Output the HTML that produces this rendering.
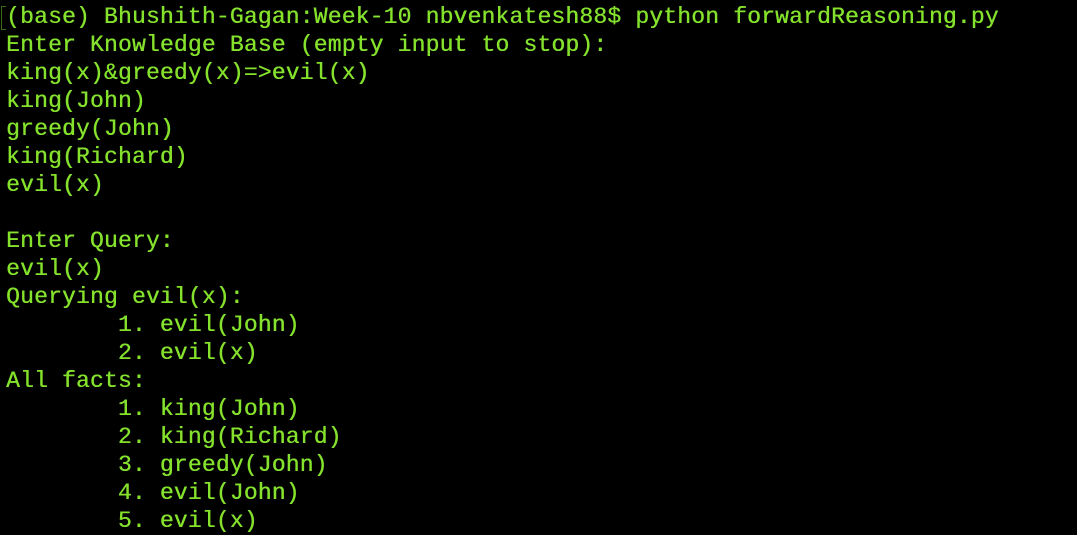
<html><head><style>
body{margin:0;background:#000;width:1077px;height:535px;overflow:hidden}
pre{margin:0;position:absolute;left:6px;top:3px;font-family:"Liberation Mono",monospace;font-size:23px;line-height:28px;color:#84e12c;letter-spacing:0.18px;text-shadow:0.4px 0 0 #84e12c}
.c{position:absolute;left:1px;top:6px;width:4px;height:22px;border:1px solid #3a6a1a;border-right:none}
</style></head><body><div class="c"></div><pre>(base) Bhushith-Gagan:Week-10 nbvenkatesh88$ python forwardReasoning.py
Enter Knowledge Base (empty input to stop):
king(x)&amp;greedy(x)=&gt;evil(x)
king(John)
greedy(John)
king(Richard)
evil(x)

Enter Query:
evil(x)
Querying evil(x):
        1. evil(John)
        2. evil(x)
All facts:
        1. king(John)
        2. king(Richard)
        3. greedy(John)
        4. evil(John)
        5. evil(x)
</pre></body></html>
